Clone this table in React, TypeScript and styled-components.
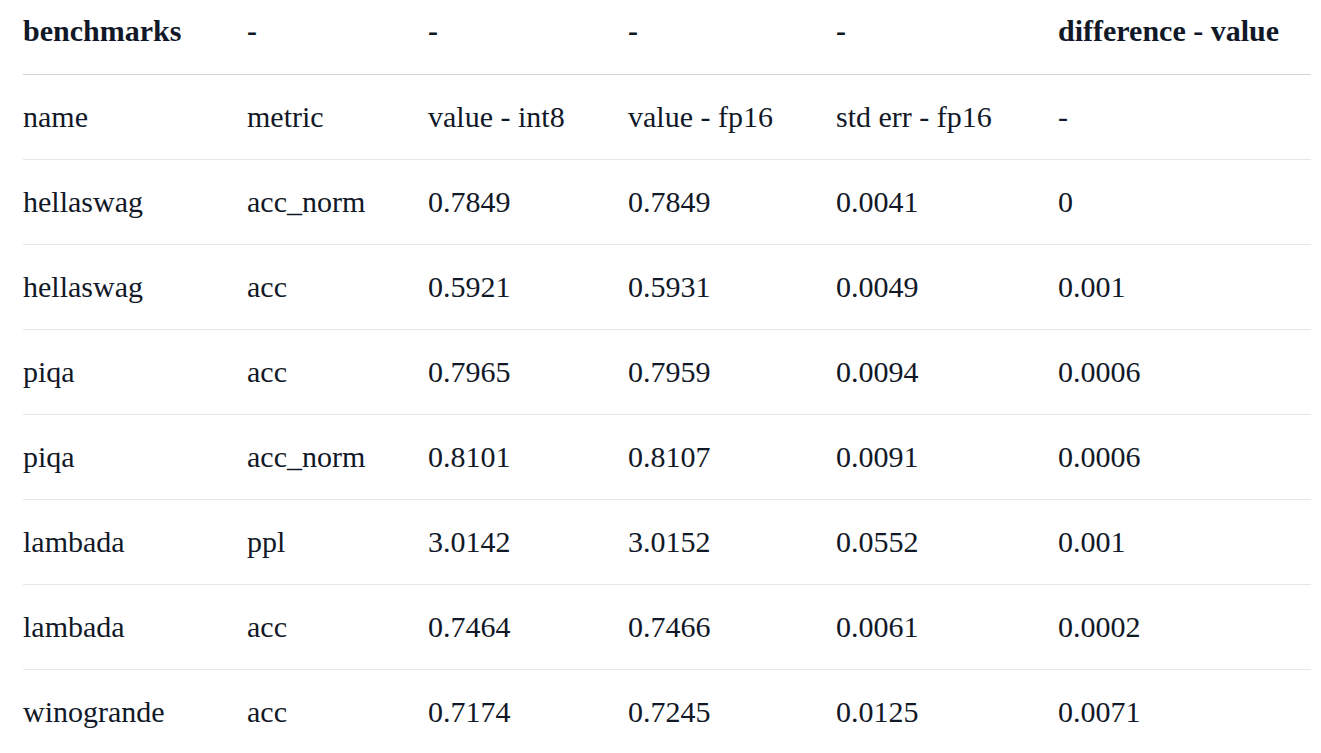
import styled, { createGlobalStyle } from "styled-components";

const GlobalStyle = createGlobalStyle`
  html, body {
    margin: 0;
    padding: 0;
    background: #ffffff;
  }
  body {
    font-family: "Liberation Serif", "Times New Roman", serif;
    color: #111827;
  }
`;

const columns = [224, 181, 200, 208, 222, 253];

const header = ["benchmarks", "-", "-", "-", "-", "difference - value"];

const rows: string[][] = [
  ["name", "metric", "value - int8", "value - fp16", "std err - fp16", "-"],
  ["hellaswag", "acc_norm", "0.7849", "0.7849", "0.0041", "0"],
  ["hellaswag", "acc", "0.5921", "0.5931", "0.0049", "0.001"],
  ["piqa", "acc", "0.7965", "0.7959", "0.0094", "0.0006"],
  ["piqa", "acc_norm", "0.8101", "0.8107", "0.0091", "0.0006"],
  ["lambada", "ppl", "3.0142", "3.0152", "0.0552", "0.001"],
  ["lambada", "acc", "0.7464", "0.7466", "0.0061", "0.0002"],
  ["winogrande", "acc", "0.7174", "0.7245", "0.0125", "0.0071"],
];

export default function App() {
  return (
    <>
      <GlobalStyle />
      <Page>
        <Table>
          <colgroup>
            {columns.map((w, i) => (
              <col key={i} style={{ width: w }} />
            ))}
          </colgroup>
          <thead>
            <tr>
              {header.map((h, i) => (
                <HeadCell key={i}>{h}</HeadCell>
              ))}
            </tr>
          </thead>
          <tbody>
            {rows.map((r, ri) => (
              <Row key={ri}>
                {r.map((c, ci) => (
                  <Cell key={ci}>{c}</Cell>
                ))}
              </Row>
            ))}
          </tbody>
        </Table>
      </Page>
    </>
  );
}

const Page = styled.div`
  padding: 0 10px 0 23px;
`;

const Table = styled.table`
  width: 1288px;
  border-collapse: collapse;
  table-layout: fixed;
  font-size: 30px;
`;

const HeadCell = styled.th`
  height: 74px;
  padding: 0 0 12px 0;
  box-sizing: border-box;
  text-align: left;
  vertical-align: middle;
  font-weight: 700;
  line-height: 1.2;
  white-space: nowrap;
  border-bottom: 1px solid #d1d5db;
`;

const Row = styled.tr`
  border-bottom: 1px solid #e5e7eb;

  &:last-child {
    border-bottom: none;
  }
`;

const Cell = styled.td`
  height: 84px;
  padding: 0;
  text-align: left;
  vertical-align: middle;
  line-height: 1.2;
  white-space: nowrap;
`;
